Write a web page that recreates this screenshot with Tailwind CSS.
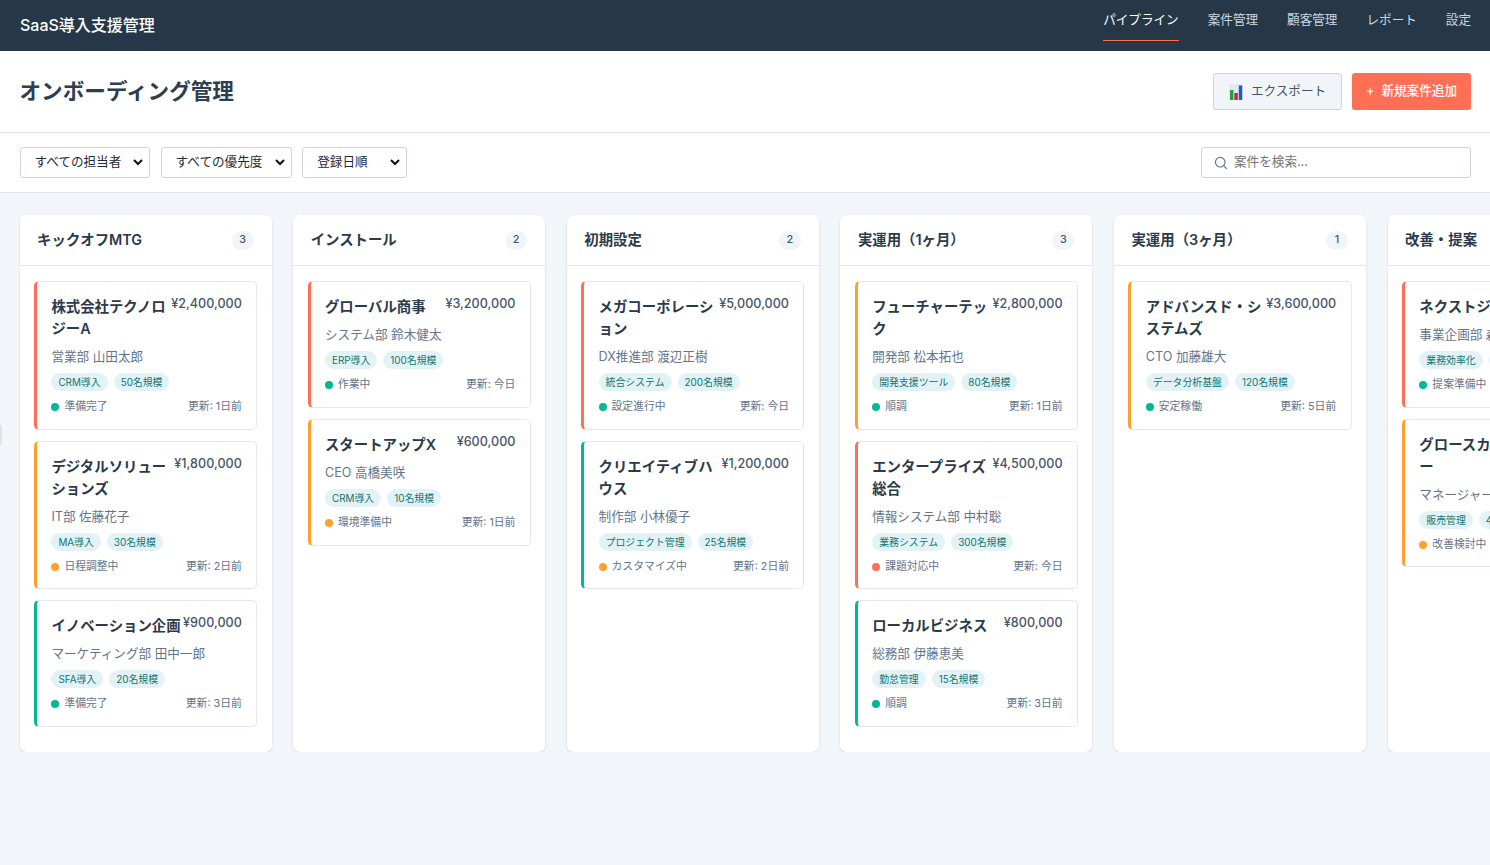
<!DOCTYPE html>
<html lang="ja">
<head>
<meta charset="UTF-8">
<title>SaaS導入支援管理</title>
<script src="https://cdn.jsdelivr.net/npm/@tailwindcss/browser@4"></script>
</head>
<body class="relative bg-[#f2f6fa] h-[865px] w-[1490px] overflow-hidden text-[#2b3a4a] [line-break:loose] font-['Inter','Noto_Sans_CJK_JP',sans-serif]">

<!-- Header -->
<header class="h-[51px] bg-[#263847] flex justify-between pl-5 pr-[19px]">
  <div class="text-white text-[16px] font-medium leading-[51px]">SaaS導入支援管理</div>
  <nav class="flex gap-[29px] text-[12.6px] text-[#cbd5e1]">
    <a class="h-[41px] leading-[39px] text-white border-b border-[#ff6f55]">パイプライン</a>
    <a class="leading-[39px]">案件管理</a>
    <a class="leading-[39px]">顧客管理</a>
    <a class="leading-[39px]">レポート</a>
    <a class="leading-[39px]">設定</a>
  </nav>
</header>

<!-- Page title -->
<section class="h-[82px] bg-white border-b border-[#dfe6ee] flex items-center justify-between pl-[19.5px] pr-[19px]">
  <h1 class="text-[21.6px] font-bold text-[#2c3e50]">オンボーディング管理</h1>
  <div class="flex gap-2.5">
    <button class="w-[129px] h-[37px] flex items-center justify-center gap-2 bg-[#f1f5f9] border border-[#cbd5e1] rounded-[3px] text-[12.6px] text-[#475569]">
      <svg width="14" height="16" viewBox="0 0 14 16"><rect width="14" height="16" fill="#e2e8ee"/><rect x="1" y="6" width="3.4" height="10" fill="#22a045"/><rect x="5.4" y="9" width="3.4" height="7" fill="#c62828"/><rect x="9.8" y="1.5" width="3.4" height="14.5" fill="#1a5fc0"/></svg>
      エクスポート
    </button>
    <button class="w-[119px] h-[37px] flex items-center justify-center gap-[7px] bg-[#ff6f55] rounded-[3px] text-[12.6px] text-white font-medium">
      <span>+</span><span>新規案件追加</span>
    </button>
  </div>
</section>

<!-- Filters -->
<section class="h-[60px] bg-white border-b border-[#dfe6ee] flex items-center justify-between pl-5 pr-[19px]">
  <div class="flex gap-[10.6px]">
    <div class="w-[130px] h-[31px] pl-[13.5px] pr-[6px] flex items-center justify-between bg-white border border-[#cbd5e1] rounded-[3px] text-[12.6px] text-[#1f2937]">すべての担当者
      <svg width="10" height="7" viewBox="0 0 10 7" fill="none" stroke="#111" stroke-width="2"><path d="M1 1l4 4 4-4"/></svg></div>
    <div class="w-[131px] h-[31px] pl-[14px] pr-[6px] flex items-center justify-between bg-white border border-[#cbd5e1] rounded-[3px] text-[12.6px] text-[#1f2937]">すべての優先度
      <svg width="10" height="7" viewBox="0 0 10 7" fill="none" stroke="#111" stroke-width="2"><path d="M1 1l4 4 4-4"/></svg></div>
    <div class="w-[105px] h-[31px] pl-[14px] pr-[6px] flex items-center justify-between bg-white border border-[#cbd5e1] rounded-[3px] text-[12.6px] text-[#1f2937]">登録日順
      <svg width="10" height="7" viewBox="0 0 10 7" fill="none" stroke="#111" stroke-width="2"><path d="M1 1l4 4 4-4"/></svg></div>
  </div>
  <div class="w-[270px] h-[31px] pl-3 flex items-center gap-[6px] border border-[#cbd5e1] rounded-[3px] text-[12.6px] text-[#757575]">
    <svg width="14" height="14" viewBox="0 0 14 14" fill="none" stroke="#64748b" stroke-width="1.2"><circle cx="6.2" cy="6.2" r="4.8"/><path d="M9.8 9.8l3 3"/></svg>
    案件を検索...
  </div>
</section>

<!-- Board -->
<main class="flex items-start gap-[21.6px] pl-[19.6px] pt-[22px] w-[1490px] overflow-hidden">

  <section class="w-[252px] h-[537px] shrink-0 bg-white rounded-[7px] shadow-sm">
    <div class="h-[51px] flex items-center justify-between pl-[17.5px] pr-[18px] border-b border-[#e2e8f0]">
      <h2 class="text-[14.4px] font-semibold">キックオフMTG</h2>
      <span class="mt-px w-[22px] h-[19px] rounded-full bg-[#f1f5f9] text-[10.8px] font-medium text-[#475569] flex items-center justify-center">3</span>
    </div>
    <div class="px-[14.4px] pt-[15px] flex flex-col gap-[11px]">
      <article class="h-[148.6px] border border-[#e2e8f0] border-l-[3px] border-l-[#ff6f55] rounded-[5px] px-[14.4px] pt-[14px]">
        <div class="flex justify-between"><h3 class="text-[14.4px] leading-[22px] font-semibold">株式会社テクノロジーA</h3><span class="-mt-px shrink-0 text-[12.6px] leading-[18px] font-medium text-[#475569]">¥2,400,000</span></div>
        <p class="mt-[8px] text-[12.6px] leading-[18px] text-[#64748b]">営業部 山田太郎</p>
        <div class="mt-[7px] flex gap-1.5 text-[9.9px] leading-[18px] text-[#0f766e]"><span class="px-[7px] rounded-full bg-[#e3f2f7]">CRM導入</span><span class="px-[7px] rounded-full bg-[#e3f2f7]">50名規模</span></div>
        <div class="mt-[7px] flex justify-between items-center text-[10.8px] leading-[18px] text-[#64748b]"><span class="flex items-center gap-[5px]"><i class="w-2 h-2 rounded-full bg-[#00b894]"></i>準備完了</span><span>更新: 1日前</span></div>
      </article>
      <article class="h-[148.6px] border border-[#e2e8f0] border-l-[3px] border-l-[#ff9f2e] rounded-[5px] px-[14.4px] pt-[14px]">
        <div class="flex justify-between"><h3 class="text-[14.4px] leading-[22px] font-semibold">デジタルソリューションズ</h3><span class="-mt-px shrink-0 text-[12.6px] leading-[18px] font-medium text-[#475569]">¥1,800,000</span></div>
        <p class="mt-[8px] text-[12.6px] leading-[18px] text-[#64748b]">IT部 佐藤花子</p>
        <div class="mt-[7px] flex gap-1.5 text-[9.9px] leading-[18px] text-[#0f766e]"><span class="px-[7px] rounded-full bg-[#e3f2f7]">MA導入</span><span class="px-[7px] rounded-full bg-[#e3f2f7]">30名規模</span></div>
        <div class="mt-[7px] flex justify-between items-center text-[10.8px] leading-[18px] text-[#64748b]"><span class="flex items-center gap-[5px]"><i class="w-2 h-2 rounded-full bg-[#ff9f2e]"></i>日程調整中</span><span>更新: 2日前</span></div>
      </article>
      <article class="h-[126.8px] border border-[#e2e8f0] border-l-[3px] border-l-[#00b894] rounded-[5px] px-[14.4px] pt-[14px]">
        <div class="flex justify-between"><h3 class="text-[14.4px] leading-[22px] font-semibold">イノベーション企画</h3><span class="-mt-px shrink-0 text-[12.6px] leading-[18px] font-medium text-[#475569]">¥900,000</span></div>
        <p class="mt-[8px] text-[12.6px] leading-[18px] text-[#64748b]">マーケティング部 田中一郎</p>
        <div class="mt-[7px] flex gap-1.5 text-[9.9px] leading-[18px] text-[#0f766e]"><span class="px-[7px] rounded-full bg-[#e3f2f7]">SFA導入</span><span class="px-[7px] rounded-full bg-[#e3f2f7]">20名規模</span></div>
        <div class="mt-[7px] flex justify-between items-center text-[10.8px] leading-[18px] text-[#64748b]"><span class="flex items-center gap-[5px]"><i class="w-2 h-2 rounded-full bg-[#00b894]"></i>準備完了</span><span>更新: 3日前</span></div>
      </article>
    </div>
  </section>

  <section class="w-[252px] h-[537px] shrink-0 bg-white rounded-[7px] shadow-sm">
    <div class="h-[51px] flex items-center justify-between pl-[17.5px] pr-[18px] border-b border-[#e2e8f0]">
      <h2 class="text-[14.4px] font-semibold">インストール</h2>
      <span class="mt-px w-[22px] h-[19px] rounded-full bg-[#f1f5f9] text-[10.8px] font-medium text-[#475569] flex items-center justify-center">2</span>
    </div>
    <div class="px-[14.4px] pt-[15px] flex flex-col gap-[11px]">
      <article class="h-[126.8px] border border-[#e2e8f0] border-l-[3px] border-l-[#ff6f55] rounded-[5px] px-[14.4px] pt-[14px]">
        <div class="flex justify-between"><h3 class="text-[14.4px] leading-[22px] font-semibold">グローバル商事</h3><span class="-mt-px shrink-0 text-[12.6px] leading-[18px] font-medium text-[#475569]">¥3,200,000</span></div>
        <p class="mt-[8px] text-[12.6px] leading-[18px] text-[#64748b]">システム部 鈴木健太</p>
        <div class="mt-[7px] flex gap-1.5 text-[9.9px] leading-[18px] text-[#0f766e]"><span class="px-[7px] rounded-full bg-[#e3f2f7]">ERP導入</span><span class="px-[7px] rounded-full bg-[#e3f2f7]">100名規模</span></div>
        <div class="mt-[7px] flex justify-between items-center text-[10.8px] leading-[18px] text-[#64748b]"><span class="flex items-center gap-[5px]"><i class="w-2 h-2 rounded-full bg-[#00b894]"></i>作業中</span><span>更新: 今日</span></div>
      </article>
      <article class="h-[126.8px] border border-[#e2e8f0] border-l-[3px] border-l-[#ff9f2e] rounded-[5px] px-[14.4px] pt-[14px]">
        <div class="flex justify-between"><h3 class="text-[14.4px] leading-[22px] font-semibold">スタートアップX</h3><span class="-mt-px shrink-0 text-[12.6px] leading-[18px] font-medium text-[#475569]">¥600,000</span></div>
        <p class="mt-[8px] text-[12.6px] leading-[18px] text-[#64748b]">CEO 高橋美咲</p>
        <div class="mt-[7px] flex gap-1.5 text-[9.9px] leading-[18px] text-[#0f766e]"><span class="px-[7px] rounded-full bg-[#e3f2f7]">CRM導入</span><span class="px-[7px] rounded-full bg-[#e3f2f7]">10名規模</span></div>
        <div class="mt-[7px] flex justify-between items-center text-[10.8px] leading-[18px] text-[#64748b]"><span class="flex items-center gap-[5px]"><i class="w-2 h-2 rounded-full bg-[#ff9f2e]"></i>環境準備中</span><span>更新: 1日前</span></div>
      </article>
    </div>
  </section>

  <section class="w-[252px] h-[537px] shrink-0 bg-white rounded-[7px] shadow-sm">
    <div class="h-[51px] flex items-center justify-between pl-[17.5px] pr-[18px] border-b border-[#e2e8f0]">
      <h2 class="text-[14.4px] font-semibold">初期設定</h2>
      <span class="mt-px w-[22px] h-[19px] rounded-full bg-[#f1f5f9] text-[10.8px] font-medium text-[#475569] flex items-center justify-center">2</span>
    </div>
    <div class="px-[14.4px] pt-[15px] flex flex-col gap-[11px]">
      <article class="h-[148.6px] border border-[#e2e8f0] border-l-[3px] border-l-[#ff6f55] rounded-[5px] px-[14.4px] pt-[14px]">
        <div class="flex justify-between"><h3 class="text-[14.4px] leading-[22px] font-semibold">メガコーポレーション</h3><span class="-mt-px shrink-0 text-[12.6px] leading-[18px] font-medium text-[#475569]">¥5,000,000</span></div>
        <p class="mt-[8px] text-[12.6px] leading-[18px] text-[#64748b]">DX推進部 渡辺正樹</p>
        <div class="mt-[7px] flex gap-1.5 text-[9.9px] leading-[18px] text-[#0f766e]"><span class="px-[7px] rounded-full bg-[#e3f2f7]">統合システム</span><span class="px-[7px] rounded-full bg-[#e3f2f7]">200名規模</span></div>
        <div class="mt-[7px] flex justify-between items-center text-[10.8px] leading-[18px] text-[#64748b]"><span class="flex items-center gap-[5px]"><i class="w-2 h-2 rounded-full bg-[#00b894]"></i>設定進行中</span><span>更新: 今日</span></div>
      </article>
      <article class="h-[148.6px] border border-[#e2e8f0] border-l-[3px] border-l-[#00b894] rounded-[5px] px-[14.4px] pt-[14px]">
        <div class="flex justify-between"><h3 class="text-[14.4px] leading-[22px] font-semibold">クリエイティブハウス</h3><span class="-mt-px shrink-0 text-[12.6px] leading-[18px] font-medium text-[#475569]">¥1,200,000</span></div>
        <p class="mt-[8px] text-[12.6px] leading-[18px] text-[#64748b]">制作部 小林優子</p>
        <div class="mt-[7px] flex gap-1.5 text-[9.9px] leading-[18px] text-[#0f766e]"><span class="px-[7px] rounded-full bg-[#e3f2f7]">プロジェクト管理</span><span class="px-[7px] rounded-full bg-[#e3f2f7]">25名規模</span></div>
        <div class="mt-[7px] flex justify-between items-center text-[10.8px] leading-[18px] text-[#64748b]"><span class="flex items-center gap-[5px]"><i class="w-2 h-2 rounded-full bg-[#ff9f2e]"></i>カスタマイズ中</span><span>更新: 2日前</span></div>
      </article>
    </div>
  </section>

  <section class="w-[252px] h-[537px] shrink-0 bg-white rounded-[7px] shadow-sm">
    <div class="h-[51px] flex items-center justify-between pl-[17.5px] pr-[18px] border-b border-[#e2e8f0]">
      <h2 class="text-[14.4px] font-semibold">実運用（1ヶ月）</h2>
      <span class="mt-px w-[22px] h-[19px] rounded-full bg-[#f1f5f9] text-[10.8px] font-medium text-[#475569] flex items-center justify-center">3</span>
    </div>
    <div class="px-[14.4px] pt-[15px] flex flex-col gap-[11px]">
      <article class="h-[148.6px] border border-[#e2e8f0] border-l-[3px] border-l-[#ff9f2e] rounded-[5px] px-[14.4px] pt-[14px]">
        <div class="flex justify-between"><h3 class="text-[14.4px] leading-[22px] font-semibold">フューチャーテック</h3><span class="-mt-px shrink-0 text-[12.6px] leading-[18px] font-medium text-[#475569]">¥2,800,000</span></div>
        <p class="mt-[8px] text-[12.6px] leading-[18px] text-[#64748b]">開発部 松本拓也</p>
        <div class="mt-[7px] flex gap-1.5 text-[9.9px] leading-[18px] text-[#0f766e]"><span class="px-[7px] rounded-full bg-[#e3f2f7]">開発支援ツール</span><span class="px-[7px] rounded-full bg-[#e3f2f7]">80名規模</span></div>
        <div class="mt-[7px] flex justify-between items-center text-[10.8px] leading-[18px] text-[#64748b]"><span class="flex items-center gap-[5px]"><i class="w-2 h-2 rounded-full bg-[#00b894]"></i>順調</span><span>更新: 1日前</span></div>
      </article>
      <article class="h-[148.6px] border border-[#e2e8f0] border-l-[3px] border-l-[#ff6f55] rounded-[5px] px-[14.4px] pt-[14px]">
        <div class="flex justify-between"><h3 class="text-[14.4px] leading-[22px] font-semibold">エンタープライズ総合</h3><span class="-mt-px shrink-0 text-[12.6px] leading-[18px] font-medium text-[#475569]">¥4,500,000</span></div>
        <p class="mt-[8px] text-[12.6px] leading-[18px] text-[#64748b]">情報システム部 中村聡</p>
        <div class="mt-[7px] flex gap-1.5 text-[9.9px] leading-[18px] text-[#0f766e]"><span class="px-[7px] rounded-full bg-[#e3f2f7]">業務システム</span><span class="px-[7px] rounded-full bg-[#e3f2f7]">300名規模</span></div>
        <div class="mt-[7px] flex justify-between items-center text-[10.8px] leading-[18px] text-[#64748b]"><span class="flex items-center gap-[5px]"><i class="w-2 h-2 rounded-full bg-[#ff6f55]"></i>課題対応中</span><span>更新: 今日</span></div>
      </article>
      <article class="h-[126.8px] border border-[#e2e8f0] border-l-[3px] border-l-[#00b894] rounded-[5px] px-[14.4px] pt-[14px]">
        <div class="flex justify-between"><h3 class="text-[14.4px] leading-[22px] font-semibold">ローカルビジネス</h3><span class="-mt-px shrink-0 text-[12.6px] leading-[18px] font-medium text-[#475569]">¥800,000</span></div>
        <p class="mt-[8px] text-[12.6px] leading-[18px] text-[#64748b]">総務部 伊藤恵美</p>
        <div class="mt-[7px] flex gap-1.5 text-[9.9px] leading-[18px] text-[#0f766e]"><span class="px-[7px] rounded-full bg-[#e3f2f7]">勤怠管理</span><span class="px-[7px] rounded-full bg-[#e3f2f7]">15名規模</span></div>
        <div class="mt-[7px] flex justify-between items-center text-[10.8px] leading-[18px] text-[#64748b]"><span class="flex items-center gap-[5px]"><i class="w-2 h-2 rounded-full bg-[#00b894]"></i>順調</span><span>更新: 3日前</span></div>
      </article>
    </div>
  </section>

  <section class="w-[252px] h-[537px] shrink-0 bg-white rounded-[7px] shadow-sm">
    <div class="h-[51px] flex items-center justify-between pl-[17.5px] pr-[18px] border-b border-[#e2e8f0]">
      <h2 class="text-[14.4px] font-semibold">実運用（3ヶ月）</h2>
      <span class="mt-px w-[22px] h-[19px] rounded-full bg-[#f1f5f9] text-[10.8px] font-medium text-[#475569] flex items-center justify-center">1</span>
    </div>
    <div class="px-[14.4px] pt-[15px] flex flex-col gap-[11px]">
      <article class="h-[148.6px] border border-[#e2e8f0] border-l-[3px] border-l-[#ff9f2e] rounded-[5px] px-[14.4px] pt-[14px]">
        <div class="flex justify-between"><h3 class="text-[14.4px] leading-[22px] font-semibold">アドバンスド・システムズ</h3><span class="-mt-px shrink-0 text-[12.6px] leading-[18px] font-medium text-[#475569]">¥3,600,000</span></div>
        <p class="mt-[8px] text-[12.6px] leading-[18px] text-[#64748b]">CTO 加藤雄大</p>
        <div class="mt-[7px] flex gap-1.5 text-[9.9px] leading-[18px] text-[#0f766e]"><span class="px-[7px] rounded-full bg-[#e3f2f7]">データ分析基盤</span><span class="px-[7px] rounded-full bg-[#e3f2f7]">120名規模</span></div>
        <div class="mt-[7px] flex justify-between items-center text-[10.8px] leading-[18px] text-[#64748b]"><span class="flex items-center gap-[5px]"><i class="w-2 h-2 rounded-full bg-[#00b894]"></i>安定稼働</span><span>更新: 5日前</span></div>
      </article>
    </div>
  </section>

  <section class="w-[252px] h-[537px] shrink-0 bg-white rounded-[7px] shadow-sm">
    <div class="h-[51px] flex items-center justify-between pl-[17.5px] pr-[18px] border-b border-[#e2e8f0]">
      <h2 class="text-[14.4px] font-semibold">改善・提案</h2>
      <span class="mt-px w-[22px] h-[19px] rounded-full bg-[#f1f5f9] text-[10.8px] font-medium text-[#475569] flex items-center justify-center">2</span>
    </div>
    <div class="px-[14.4px] pt-[15px] flex flex-col gap-[11px]">
      <article class="h-[126.8px] border border-[#e2e8f0] border-l-[3px] border-l-[#ff6f55] rounded-[5px] px-[14.4px] pt-[14px]">
        <div class="flex justify-between"><h3 class="text-[14.4px] leading-[22px] font-semibold">ネクストジェン</h3><span class="-mt-px shrink-0 text-[12.6px] leading-[18px] font-medium text-[#475569]">¥1,500,000</span></div>
        <p class="mt-[8px] text-[12.6px] leading-[18px] text-[#64748b]">事業企画部 森田直樹</p>
        <div class="mt-[7px] flex gap-1.5 text-[9.9px] leading-[18px] text-[#0f766e]"><span class="px-[7px] rounded-full bg-[#e3f2f7]">業務効率化</span><span class="px-[7px] rounded-full bg-[#e3f2f7]">60名規模</span></div>
        <div class="mt-[7px] flex justify-between items-center text-[10.8px] leading-[18px] text-[#64748b]"><span class="flex items-center gap-[5px]"><i class="w-2 h-2 rounded-full bg-[#00b894]"></i>提案準備中</span><span>更新: 1日前</span></div>
      </article>
      <article class="h-[148.6px] border border-[#e2e8f0] border-l-[3px] border-l-[#ff9f2e] rounded-[5px] px-[14.4px] pt-[14px]">
        <div class="flex justify-between"><h3 class="text-[14.4px] leading-[22px] font-semibold">グロースカンパニー</h3><span class="-mt-px shrink-0 text-[12.6px] leading-[18px] font-medium text-[#475569]">¥2,000,000</span></div>
        <p class="mt-[8px] text-[12.6px] leading-[18px] text-[#64748b]">マネージャー 吉田</p>
        <div class="mt-[7px] flex gap-1.5 text-[9.9px] leading-[18px] text-[#0f766e]"><span class="px-[7px] rounded-full bg-[#e3f2f7]">販売管理</span><span class="px-[7px] rounded-full bg-[#e3f2f7]">40名規模</span></div>
        <div class="mt-[7px] flex justify-between items-center text-[10.8px] leading-[18px] text-[#64748b]"><span class="flex items-center gap-[5px]"><i class="w-2 h-2 rounded-full bg-[#ff9f2e]"></i>改善検討中</span><span>更新: 2日前</span></div>
      </article>
    </div>
  </section>

</main>
<div class="absolute left-0 top-[425px] w-[2px] h-[20px] bg-[#e3e3df]"></div>
</body>
</html>
